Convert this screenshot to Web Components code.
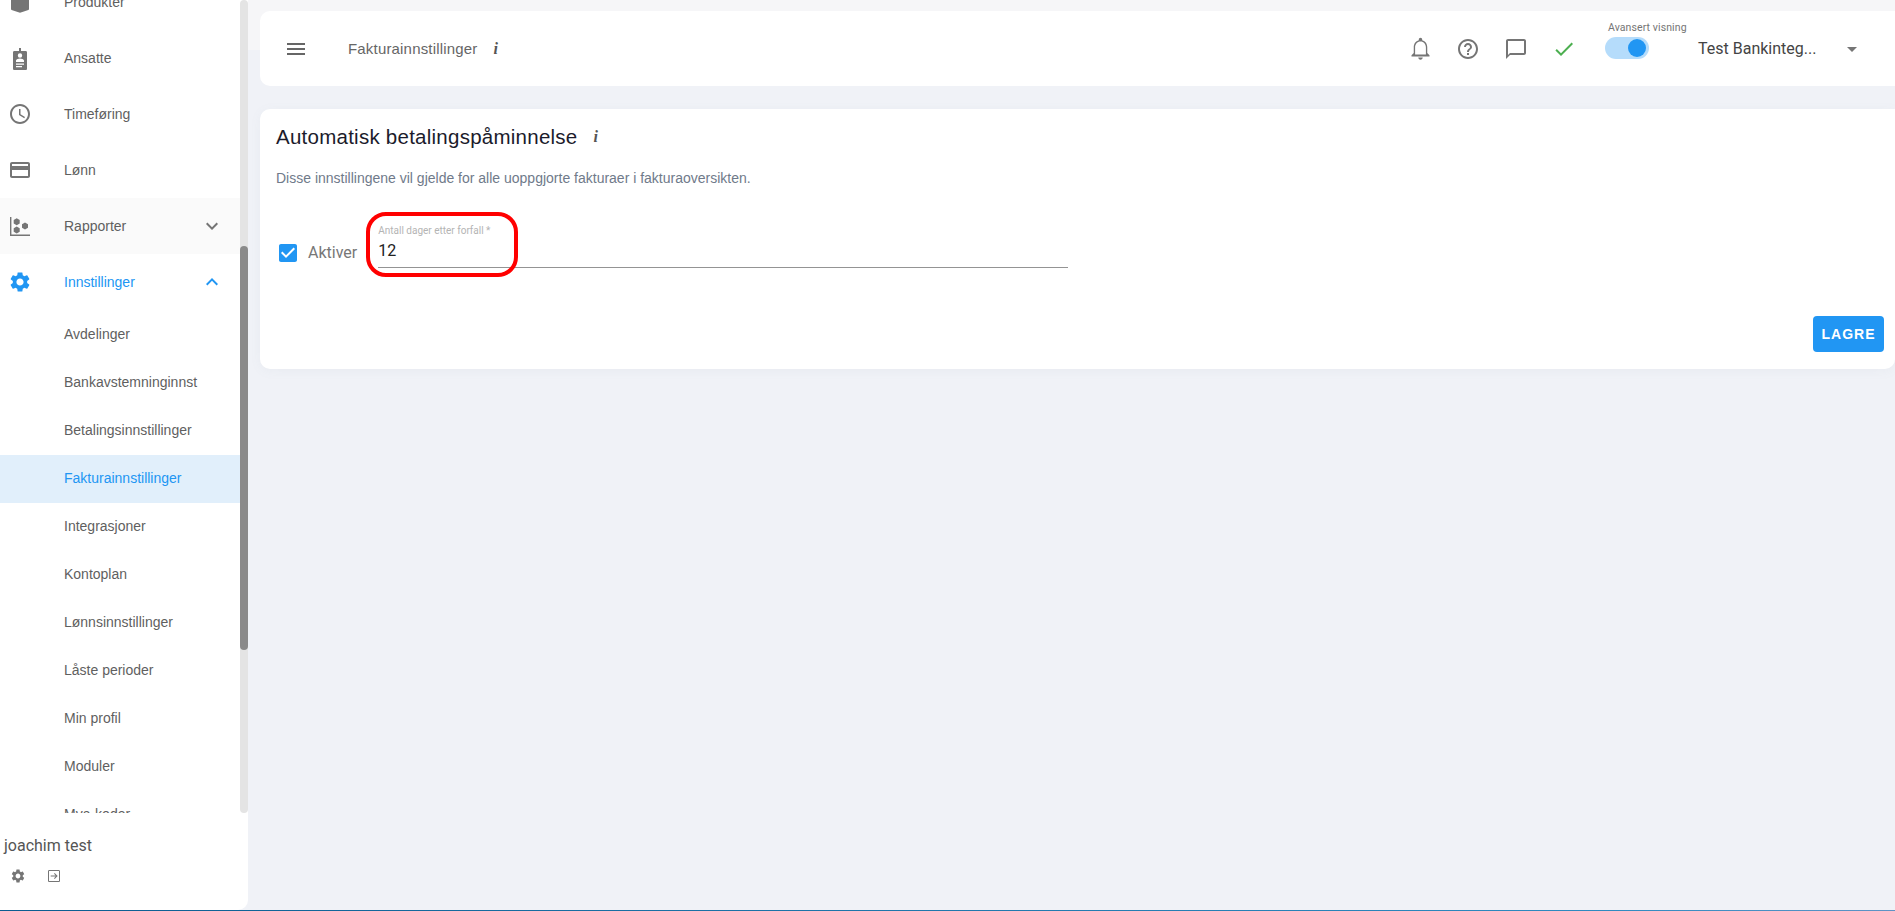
<!DOCTYPE html>
<html lang="no">
<head>
<meta charset="utf-8">
<title>Fakturainnstillinger</title>
<style>
  html, body { margin: 0; height: 100%; overflow: hidden; }
  body { background: #f0f2f7; font-family: "Liberation Sans", Arial, sans-serif; }
</style>
</head>
<body>
<app-shell>
  <side-nav slot="nav"></side-nav>
  <top-bar slot="top" title="Fakturainnstillinger"></top-bar>
  <reminder-card slot="main"></reminder-card>
</app-shell>

<script>
// material style icon paths, viewBox 24
const ICONS = {
  product: '<path d="M12 1 3.500 4.500 3 5v14c0 .5.2.7.6.9L12 22.700l8.400-2.800c.4-.2.6-.4.6-.9V5l-.5-.5z"/>',
  badge: '<path fill-rule="evenodd" d="M11 2h2v3h4.500c1 0 1.500.5 1.500 1.500v16c0 1-.5 1.500-1.500 1.500h-11c-1 0-1.500-.5-1.500-1.500v-16C5 5.500 5.500 5 6.500 5H11zM12 7.300a2.200 2.200 0 1 0 0 4.400 2.200 2.200 0 0 0 0-4.400zM8 16h8v-1.500c0-1.300-2.500-2-4-2s-4 .7-4 2zM8 17.500v1.200h8v-1.200zM8 20v1.200h6V20z"/>',
  clock: '<path d="M11.990 2C6.470 2 2 6.480 2 12s4.470 10 9.990 10C17.520 22 22 17.520 22 12S17.520 2 11.990 2zM12 20c-4.420 0-8-3.580-8-8s3.580-8 8-8 8 3.580 8 8-3.580 8-8 8zm.5-13H11v6l5.250 3.150.75-1.230-4.500-2.670z"/>',
  card: '<path d="M20 4H4c-1.110 0-1.990.89-1.990 2L2 18c0 1.110.89 2 2 2h16c1.110 0 2-.89 2-2V6c0-1.110-.89-2-2-2zm0 14H4v-6h16v6zm0-10H4V6h16v2z"/>',
  report: '<path d="M2 3h1.400v17.600H22V22H2z"/><path d="M8.700 4.200l3 1.750v3.500l-3 1.750-3-1.750v-3.500zM8.700 12.500l3 1.750v3.500l-3 1.750-3-1.750v-3.500zM17 8.400l3 1.750v3.500l-3 1.750-3-1.750v-3.500z"/>',
  gear: '<path d="M19.140 12.940c.04-.3.06-.61.06-.94 0-.32-.02-.64-.07-.94l2.030-1.580c.18-.14.23-.41.12-.61l-1.920-3.320c-.12-.22-.37-.29-.59-.22l-2.390.96c-.5-.38-1.030-.7-1.620-.94l-.36-2.540c-.04-.24-.24-.41-.48-.41h-3.840c-.24 0-.43.17-.47.41l-.36 2.540c-.59.24-1.130.57-1.620.94l-2.390-.96c-.22-.08-.47 0-.59.22L2.740 8.870c-.12.21-.08.47.12.61l2.030 1.580c-.05.3-.09.63-.09.94s.02.64.07.94l-2.030 1.580c-.18.14-.23.41-.12.61l1.920 3.320c.12.22.37.29.59.22l2.390-.96c.5.38 1.030.7 1.620.94l.36 2.540c.05.24.24.41.48.41h3.840c.24 0 .44-.17.47-.41l.36-2.540c.59-.24 1.130-.56 1.620-.94l2.390.96c.22.08.47 0 .59-.22l1.920-3.320c.12-.22.07-.47-.12-.61l-2.010-1.580zM12 15.600c-1.980 0-3.600-1.620-3.600-3.600s1.620-3.600 3.600-3.600 3.600 1.620 3.600 3.600-1.620 3.600-3.600 3.600z"/>',
  down: '<path d="M16.590 8.590 12 13.170 7.410 8.590 6 10l6 6 6-6z"/>',
  up: '<path d="M12 8l-6 6 1.410 1.410L12 10.830l4.590 4.580L18 14z"/>',
  menu: '<path d="M3 18h18v-2H3v2zm0-5h18v-2H3v2zm0-7v2h18V6H3z"/>',
  bell: '<path d="M12 22c1.100 0 2-.9 2-2h-4c0 1.100.9 2 2 2zm6-6v-5c0-3.070-1.630-5.640-4.500-6.320V4c0-.83-.67-1.500-1.500-1.500s-1.500.67-1.500 1.500v.68C7.640 5.360 6 7.920 6 11v5l-2 2v1h16v-1l-2-2zm-1.200 1.300H7.200V11c0-2.900 1.900-5.300 4.800-5.300s4.800 2.400 4.800 5.300z"/>',
  help: '<path d="M11 18h2v-2h-2v2zm1-16C6.480 2 2 6.480 2 12s4.480 10 10 10 10-4.480 10-10S17.520 2 12 2zm0 18c-4.410 0-8-3.590-8-8s3.590-8 8-8 8 3.590 8 8-3.590 8-8 8zm0-14c-2.210 0-4 1.790-4 4h2c0-1.100.9-2 2-2s2 .9 2 2c0 2-3 1.750-3 5h2c0-2.250 3-2.500 3-5 0-2.210-1.790-4-4-4z"/>',
  chat: '<path d="M20 2H4c-1.100 0-2 .9-2 2v18l4-4h14c1.100 0 2-.9 2-2V4c0-1.100-.9-2-2-2zm0 14H6l-2 2V4h16v12z"/>',
  check: '<path d="M9 16.170 4.830 12l-1.420 1.410L9 19 21 7l-1.410-1.410z"/>',
  checkbox: '<path d="M19 3H5c-1.110 0-2 .9-2 2v14c0 1.100.89 2 2 2h14c1.110 0 2-.89 2-2V5c0-1.100-.89-2-2-2zm-9 14-5-5 1.410-1.410L10 14.170l7.590-7.590L19 8l-9 9z"/>',
  caret: '<path d="M7 10l5 5 5-5z"/>',
  exit: '<path d="M5 3h14c1.100 0 2 .9 2 2v14c0 1.100-.9 2-2 2H5c-1.100 0-2-.9-2-2V5c0-1.100.9-2 2-2zm0 1.500c-.3 0-.5.2-.5.5v14c0 .3.2.5.5.5h14c.3 0 .5-.2.5-.5V5c0-.3-.2-.5-.5-.5zM7 11.200h7.500L12 8.700l1.100-1.100 4.400 4.400-4.400 4.400-1.100-1.100 2.500-2.500H7z"/>'
};

class AppIcon extends HTMLElement {
  connectedCallback() {
    const size = this.getAttribute('size') || 24;
    const root = this.attachShadow({mode: 'open'});
    root.innerHTML = `
      <style>
        :host { display: inline-flex; flex: none; width: ${size}px; height: ${size}px; color: inherit; }
        svg { display: block; width: 100%; height: 100%; fill: currentColor; }
      </style>
      <svg viewBox="0 0 24 24">${ICONS[this.getAttribute('name')]}</svg>`;
  }
}
customElements.define('app-icon', AppIcon);

class NavItem extends HTMLElement {
  connectedCallback() {
    const icon = this.getAttribute('icon');
    const chevron = this.getAttribute('chevron');
    const root = this.attachShadow({mode: 'open'});
    root.innerHTML = `
      <style>
        :host { display: flex; align-items: center; height: 56px; padding-left: 8px; color: #5f5f5f; font: 14px/20px "Liberation Sans", Arial, sans-serif; }
        :host([sub]) { height: 48px; box-sizing: border-box; padding: 0 0 2px 64px; }
        :host([first]) { margin-top: 1px; }
        :host([hover]) { background: #fafafa; }
        :host([open]) { color: #2196f3; }
        :host([active]) { background: #e1effb; color: #2196f3; }
        .icon { width: 56px; display: flex; color: #757575; }
        :host([open]) .icon { color: #2196f3; }
        .label { flex: 1; }
        .chev { margin-right: 16px; display: flex; color: #757575; }
        :host([open]) .chev { color: #2196f3; }
      </style>
      ${icon ? `<span class="icon"><app-icon name="${icon}"></app-icon></span>` : ''}
      <span class="label"><slot></slot></span>
      ${chevron ? `<span class="chev"><app-icon name="${chevron}"></app-icon></span>` : ''}`;
  }
}
customElements.define('nav-item', NavItem);

class SideNav extends HTMLElement {
  connectedCallback() {
    const root = this.attachShadow({mode: 'open'});
    root.innerHTML = `
      <style>
        :host { display: flex; flex-direction: column; height: 100%; background: #fff; border-radius: 0 0 10px 0; overflow: hidden; }
        .scroll { display: flex; height: 813px; flex: none; }
        .clip { flex: 1; min-width: 0; overflow: hidden; }
        .list { margin-top: -26px; }
        .track { width: 8px; flex: none; background: #e4e4e4; border-radius: 4px; padding-top: 246px; box-sizing: border-box; }
        .thumb { height: 404px; background: #8a8a8a; border-radius: 4px; }
        .foot { flex: 1; color: #5a5a5a; padding: 23px 0 0 4px; }
        .name { font: 16px/20px Roboto, sans-serif; color: #555; }
        .acts { display: flex; align-items: center; gap: 20px; margin: 12px 0 0 6px; color: #757575; }
      </style>
      <div class="scroll">
        <div class="clip"><div class="list">
          <nav-item icon="product">Produkter</nav-item>
          <nav-item icon="badge">Ansatte</nav-item>
          <nav-item icon="clock">Timeføring</nav-item>
          <nav-item icon="card">Lønn</nav-item>
          <nav-item icon="report" chevron="down" hover>Rapporter</nav-item>
          <nav-item icon="gear" chevron="up" open>Innstillinger</nav-item>
          <nav-item sub first>Avdelinger</nav-item>
          <nav-item sub>Bankavstemninginnst</nav-item>
          <nav-item sub>Betalingsinnstillinger</nav-item>
          <nav-item sub active>Fakturainnstillinger</nav-item>
          <nav-item sub>Integrasjoner</nav-item>
          <nav-item sub>Kontoplan</nav-item>
          <nav-item sub>Lønnsinnstillinger</nav-item>
          <nav-item sub>Låste perioder</nav-item>
          <nav-item sub>Min profil</nav-item>
          <nav-item sub>Moduler</nav-item>
          <nav-item sub>Mva-koder</nav-item>
        </div></div>
        <div class="track"><div class="thumb"></div></div>
      </div>
      <div class="foot">
        <div class="name">joachim test</div>
        <div class="acts"><app-icon name="gear" size="16"></app-icon><app-icon name="exit" size="16"></app-icon></div>
      </div>`;
  }
}
customElements.define('side-nav', SideNav);

class ToggleSwitch extends HTMLElement {
  connectedCallback() {
    const root = this.attachShadow({mode: 'open'});
    root.innerHTML = `
      <style>
        :host { display: flex; flex-direction: column; align-items: flex-start; width: 93px; }
        .cap { font: 10.500px/12px Roboto, sans-serif; color: #757575; margin: 0 0 3px 3px; letter-spacing: .1px; white-space: nowrap; }
        .track { display: flex; align-items: center; justify-content: flex-end; width: 44px; height: 22px; box-sizing: border-box; padding-right: 3px; background: #b5dcfb; border-radius: 11px; }
        .thumb { width: 18px; height: 18px; border-radius: 50%; background: #2196f3; }
      </style>
      <div class="cap"><slot></slot></div>
      <div class="track"><div class="thumb"></div></div>`;
  }
}
customElements.define('toggle-switch', ToggleSwitch);

class TopBar extends HTMLElement {
  connectedCallback() {
    const root = this.attachShadow({mode: 'open'});
    root.innerHTML = `
      <style>
        :host { display: flex; align-items: center; height: 75px; background: #fff; border-radius: 10px 0 0 10px; padding-left: 24px; font-family: "Liberation Sans", Arial, sans-serif; color: #666; }
        .title { margin-left: 40px; font-size: 15px; letter-spacing: .18px; color: #666; }
        .info { margin-left: 16px; font: italic bold 16px "Liberation Serif", serif; color: #555; }
        .right { margin-left: auto; display: flex; align-items: center; }
        .btn { display: flex; width: 48px; justify-content: center; color: #757575; }
        .ok { color: #4caf50; }
        toggle-switch { margin: -16px 0 0 17px; }
        .user { font: 16px/20px Roboto, sans-serif; color: #444; width: 142px; white-space: nowrap; }
        .caret { margin-right: 31px; color: #757575; display: flex; }
      </style>
      <app-icon name="menu"></app-icon>
      <span class="title">${this.getAttribute('title')}</span>
      <span class="info">i</span>
      <div class="right">
        <span class="btn"><app-icon name="bell" size="27"></app-icon></span>
        <span class="btn"><app-icon name="help"></app-icon></span>
        <span class="btn"><app-icon name="chat"></app-icon></span>
        <span class="btn ok"><app-icon name="check"></app-icon></span>
        <toggle-switch>Avansert visning</toggle-switch>
        <span class="user">Test Bankinteg...</span>
        <span class="caret"><app-icon name="caret"></app-icon></span>
      </div>`;
  }
}
customElements.define('top-bar', TopBar);

class TextField extends HTMLElement {
  connectedCallback() {
    const root = this.attachShadow({mode: 'open'});
    root.innerHTML = `
      <style>
        :host { display: block; position: relative; width: 690px; height: 51px; border-bottom: 1px solid #949494; box-sizing: content-box; }
        .lab { font: 10px/12px Roboto, sans-serif; color: #b4b4b4; padding-top: 9px; white-space: nowrap; }
        .val { font: 16px/20px Roboto, sans-serif; color: #222; margin-top: 4px; }
        .ring { position: absolute; left: -12px; top: -4px; width: 152px; height: 65px; box-sizing: border-box; border: 4px solid #f00; border-radius: 20px; }
      </style>
      <div class="lab">${this.getAttribute('label')}</div>
      <div class="val">${this.getAttribute('value')}</div>
      <div class="ring"></div>`;
  }
}
customElements.define('text-field', TextField);

class ReminderCard extends HTMLElement {
  connectedCallback() {
    const root = this.attachShadow({mode: 'open'});
    root.innerHTML = `
      <style>
        :host { display: block; height: 260px; box-sizing: border-box; background: #fff; border-radius: 10px 0 10px 10px; padding: 16px 11px 0 16px; font-family: "Liberation Sans", Arial, sans-serif; box-shadow: 0 2px 12px rgba(120,130,160,.06); }
        h2 { margin: 0; font-size: 20.500px; letter-spacing: .25px; line-height: 24px; font-weight: 400; color: #1b1b2b; display: flex; align-items: center; }
        .info { margin-left: 16px; font: italic bold 16px "Liberation Serif", serif; color: #555; }
        p { margin: 20px 0 0; font-size: 14px; line-height: 18px; color: #6f7a8a; }
        .row { display: flex; align-items: flex-start; margin-top: 29px; }
        .check { display: flex; align-items: center; padding: 25px 0 0 0; color: #777; font: 16px/24px Roboto, sans-serif; }
        .check app-icon { color: #2196f3; margin-right: 8px; }
        text-field { margin-left: 21px; }
        .foot { display: flex; justify-content: flex-end; margin-top: 48px; }
        button { width: 71px; height: 36px; border: 0; border-radius: 4px; background: #2196f3; color: #fff; font: bold 14px "Liberation Sans", Arial, sans-serif; letter-spacing: 1px; padding: 0; }
      </style>
      <h2>Automatisk betalingspåminnelse<span class="info">i</span></h2>
      <p>Disse innstillingene vil gjelde for alle uoppgjorte fakturaer i fakturaoversikten.</p>
      <div class="row">
        <div class="check"><app-icon name="checkbox"></app-icon>Aktiver</div>
        <text-field label="Antall dager etter forfall *" value="12"></text-field>
      </div>
      <div class="foot"><button>LAGRE</button></div>`;
  }
}
customElements.define('reminder-card', ReminderCard);

class AppShell extends HTMLElement {
  connectedCallback() {
    const root = this.attachShadow({mode: 'open'});
    root.innerHTML = `
      <style>
        :host { display: grid; grid-template-columns: 248px 1fr; grid-template-rows: 910px 1px; height: 911px; }
        main { padding: 11px 0 0 12px; display: flex; flex-direction: column; gap: 23px; min-width: 0; background: linear-gradient(#f6f6f8, #f6f6f8) no-repeat 0 0 / 100% 50px; }
        .line { grid-column: 1 / -1; background: linear-gradient(90deg, #0b5c90, #2f8ac0 85%, #5f93c5); }
      </style>
      <slot name="nav"></slot>
      <main><slot name="top"></slot><slot name="main"></slot></main>
      <div class="line"></div>`;
  }
}
customElements.define('app-shell', AppShell);
</script>
</body>
</html>
